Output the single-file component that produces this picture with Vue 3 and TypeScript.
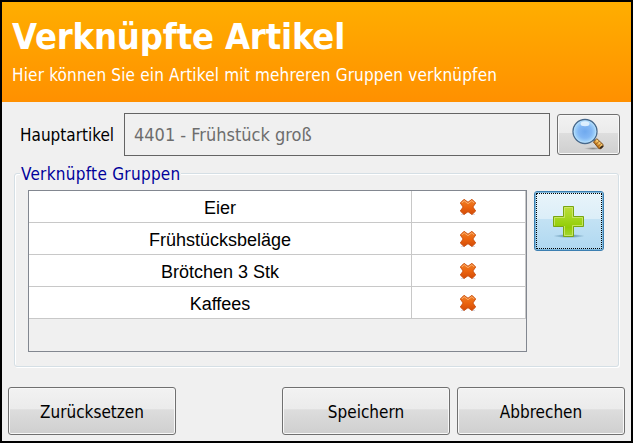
<script setup lang="ts">
import { ref } from 'vue'

interface Group {
  id: number
  name: string
}

const initial: Group[] = [
  { id: 1, name: 'Eier' },
  { id: 2, name: 'Frühstücksbeläge' },
  { id: 3, name: 'Brötchen 3 Stk' },
  { id: 4, name: 'Kaffees' },
]

const article = ref('4401 - Frühstück groß')
const groups = ref<Group[]>([...initial])

function removeGroup(id: number): void {
  groups.value = groups.value.filter((g) => g.id !== id)
}

function reset(): void {
  groups.value = [...initial]
}
</script>

<template>
  <main class="dialog">
    <header class="header">
      <h1>Verknüpfte Artikel</h1>
      <p>Hier können Sie ein Artikel mit mehreren Gruppen verknüpfen</p>
    </header>

    <section class="article-row">
      <label class="label">Hauptartikel</label>
      <div class="field">{{ article }}</div>
      <button class="btn search" type="button" aria-label="Suchen">
        <svg width="36" height="34" viewBox="0 0 36 34">
          <defs>
            <radialGradient id="lens" cx=".5" cy=".5" r=".55">
              <stop offset="0" stop-color="#6fa9ee" />
              <stop offset=".5" stop-color="#82b7f4" />
              <stop offset=".85" stop-color="#a9d9fb" />
              <stop offset="1" stop-color="#79b2e8" />
            </radialGradient>
            <linearGradient id="grip" x1="0" y1="1" x2="1" y2="0">
              <stop offset="0" stop-color="#6f3b08" />
              <stop offset=".35" stop-color="#c87a1a" />
              <stop offset=".6" stop-color="#ffd277" />
              <stop offset="1" stop-color="#945009" />
            </linearGradient>
            <radialGradient id="shade">
              <stop offset="0" stop-color="#555" stop-opacity=".6" />
              <stop offset="1" stop-color="#555" stop-opacity="0" />
            </radialGradient>
          </defs>
          <ellipse cx="22" cy="30.5" rx="9" ry="1.5" fill="url(#shade)" />
          <path d="M22 21l3 3" stroke="#777f88" stroke-width="3" />
          <circle cx="14" cy="13.500" r="12" fill="url(#lens)" stroke="#48688a" stroke-width="1.300" />
          <circle cx="14" cy="13.500" r="10.800" fill="none" stroke="#b8dffc" stroke-opacity=".65" />
          <ellipse cx="14" cy="5.700" rx="4.500" ry="2.500" fill="#eaf7ff" fill-opacity=".85" />
          <path d="M22.500 24l3.400-3.300 6.200 5.800v2.100l-2.300 2.100h-1.900z" fill="url(#grip)" stroke="#6e3e0c" stroke-width=".8" />
          <path d="M25 26.400l3.300-3.300M27.100 28.500l3.300-3.300" stroke="#7b430a" stroke-width=".8" />
          <path d="M29.200 30.400l2.700-2.600" stroke="#34281e" stroke-width="1.800" />
        </svg>
      </button>
    </section>

    <section class="groupbox">
      <h2 class="legend">Verknüpfte Gruppen</h2>
      <div class="group-content">
        <div class="table">
          <div v-for="g in groups" :key="g.id" class="row">
            <div class="name">{{ g.name }}</div>
            <div class="action" @click="removeGroup(g.id)">
              <svg width="18" height="18" viewBox="0 0 18 18">
                <defs>
                  <linearGradient id="cross" x1="0" y1="0" x2="0" y2="1">
                    <stop offset="0" stop-color="#ef8128" />
                    <stop offset=".5" stop-color="#ec650f" />
                    <stop offset="1" stop-color="#d34b08" />
                  </linearGradient>
                </defs>
                <path d="M2 16.500h4M12 16.500h4" stroke="#d9d9e2" />
                <path d="M5 1.300L9 4.200l4-2.900 3.700 3.700L13.900 9l2.800 4L13 16.500 9 13.700l-4 2.800L1.300 13l2.800-4-2.800-4z" fill="url(#cross)" stroke="#c74c0b" stroke-width=".9" stroke-linejoin="round" />
                <path d="M2.800 5l2.300-2.300L9 5.700l3.900-3L15.200 5" fill="none" stroke="#ffc08a" stroke-width=".9" stroke-opacity=".8" />
              </svg>
            </div>
          </div>
        </div>
        <button class="btn add" type="button" aria-label="Hinzufügen">
          <svg width="36" height="36" viewBox="0 0 36 36">
            <defs>
              <linearGradient id="plus" x1="0" y1="0" x2="0" y2="1">
                <stop offset="0" stop-color="#bddd3c" />
                <stop offset=".45" stop-color="#a0d51a" />
                <stop offset=".7" stop-color="#92cc06" />
                <stop offset="1" stop-color="#a4d634" />
              </linearGradient>
              <radialGradient id="plusShade">
                <stop offset="0" stop-color="#235a7c" stop-opacity=".75" />
                <stop offset="1" stop-color="#235a7c" stop-opacity="0" />
              </radialGradient>
            </defs>
            <ellipse cx="18" cy="33" rx="16" ry="2" fill="url(#plusShade)" />
            <path d="M12.500 3.500h10v10h10v10h-10v10h-10v-10h-10v-10h10z" fill="url(#plus)" stroke="#78a512" />
            <path d="M13.500 23V32.500h8V22.500h10V14.500M3.500 22.500V14.500h10V4.500h8v10h10" fill="none" stroke="#d2eb78" stroke-opacity=".75" />
          </svg>
        </button>
      </div>
    </section>

    <footer class="footer">
      <button class="btn command" type="button" @click="reset">Zurücksetzen</button>
      <button class="btn command save" type="button">Speichern</button>
      <button class="btn command cancel" type="button">Abbrechen</button>
    </footer>
  </main>
</template>

<style>
body {
  margin: 0;
  background: #000;
}
</style>

<style scoped>
* {
  box-sizing: border-box;
}
.dialog {
  width: 633px;
  height: 443px;
  border: 2px solid #000;
  background: #f0f0f0;
  color: #000;
  font-family: 'DejaVu Sans Condensed', 'DejaVu Sans', sans-serif;
  font-stretch: condensed;
  font-size: 17px;
  display: flex;
  flex-direction: column;
  overflow: hidden;
  white-space: nowrap;
}
.header {
  height: 100px;
  flex: none;
  padding: 13px 0 0 10px;
  color: #fff;
  background: linear-gradient(#ffae00, #ff9000);
}
h1,
h2,
p {
  margin: 0;
}
h1 {
  font-size: 36px;
  line-height: 44px;
  font-weight: bold;
  letter-spacing: -0.16px;
}
p {
  line-height: 22px;
  margin-top: 5px;
  letter-spacing: 0.17px;
}
.article-row {
  display: flex;
  height: 43px;
  margin-top: 11px;
  padding-left: 18px;
  align-items: center;
  flex: none;
}
.label {
  width: 104px;
  padding-top: 1px;
}
.field {
  width: 426px;
  height: 43px;
  border: 1px solid #646464;
  padding-left: 9px;
  line-height: 41px;
  font-size: 18px;
  color: #6d6d6d;
}
.btn {
  display: flex;
  align-items: center;
  justify-content: center;
  padding: 0;
  border: 1px solid #707070;
  border-radius: 3px;
  background: linear-gradient(#f2f2f2, #ebebeb 46%, #dddddd 47%, #cfcfcf);
  box-shadow: inset 0 0 0 1px #f8f8f8;
  font: inherit;
  color: #000;
}
.search {
  width: 63px;
  height: 41px;
  margin-left: 7px;
}
.groupbox {
  width: 605px;
  height: 194px;
  flex: none;
  margin: 17px 0 0 12px;
  border: 1px solid #d5dfe5;
  border-radius: 3px;
  box-shadow: inset 1px 1px #fff, 1px 1px #fff;
}
.legend {
  width: 161px;
  height: 22px;
  line-height: 23px;
  margin: -11px 0 0 5px;
  padding-left: 1px;
  font-size: 17px;
  font-weight: normal;
  letter-spacing: 0.28px;
  color: #00009b;
  background: #f0f0f0;
}
.group-content {
  display: flex;
  align-items: flex-start;
  gap: 7px;
  padding: 5px 0 0 13px;
}
.table {
  width: 499px;
  height: 162px;
  border: 1px solid #828790;
}
.row {
  display: flex;
  width: 497px;
  height: 32px;
  background: #fff;
  border-right: 1px solid #c8c8c8;
  border-bottom: 1px solid #c8c8c8;
}
.name {
  width: 383px;
  border-right: 1px solid #c8c8c8;
  text-align: center;
  font: 18px/34px 'Liberation Sans', Arial, sans-serif;
}
.action {
  flex: 1;
  display: flex;
  align-items: center;
  justify-content: center;
  padding: 1px 1px 0 0;
}
.add {
  width: 70px;
  height: 60px;
  margin-top: 1px;
  padding-bottom: 1px;
  border-color: #3c7fb1;
  background: linear-gradient(#e9f4fa, #dbeef8 46%, #c3e2f4 47%, #afd8f1);
  outline: 1px dotted #000;
  outline-offset: -3px;
  box-shadow: inset 0 0 0 1px #80b9dc;
}
.footer {
  display: flex;
  height: 48px;
  margin: 20px 0 0 6px;
  flex: none;
}
.command {
  width: 168px;
  height: 48px;
  padding-top: 1px;
}
.save {
  margin-left: 106px;
}
.cancel {
  margin-left: 7px;
}
</style>
